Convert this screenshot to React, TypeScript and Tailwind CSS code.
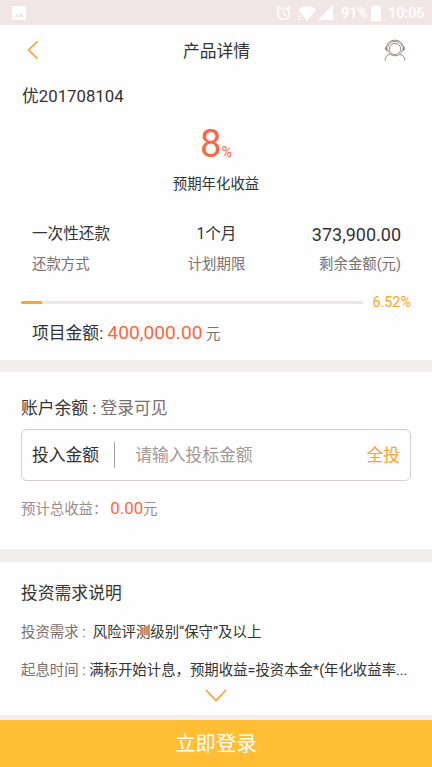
import type { ReactNode } from "react";

const product = {
  name: "优201708104",
  rate: "8",
  total: "400,000.00",
  progress: 6.52,
};

const stats = [
  { value: "一次性还款", label: "还款方式", align: "text-left", size: "text-[15.6px]" },
  { value: "1个月", label: "计划期限", align: "text-center", size: "text-[15.6px]" },
  { value: "373,900.00", label: "剩余金额(元)", align: "text-right", size: "text-[18px]" },
];

function StatusBar() {
  return (
    <div className="flex h-[25px] items-center bg-[#f0e6e6] pl-3 text-white">
      <svg width="14" height="14" viewBox="0 0 14 14">
        <rect width="14" height="14" rx="1.5" fill="currentColor" />
        <path d="M2 11l2.5-3.2 2 2L9 7l3 4z" fill="#f0e6e6" />
      </svg>
      <svg className="ml-[250px]" width="16" height="16" viewBox="0 0 16 16" fill="none" stroke="currentColor" strokeWidth="1.4">
        <circle cx="7.5" cy="8.7" r="5.8" />
        <path d="M7.500 5.300v3.700l2.600 1.600M.5 4l3-2.600M14.500 4l-3-2.600" />
      </svg>
      <svg className="ml-[5px]" width="20" height="16" viewBox="0 0 20 16" fill="currentColor">
        <path d="M1 4.500C6 0 14 0 19 4.500L10 15.500z" />
        <path d="M2.500 10L4.500 12H.5zM.5 13.500h4l-2 2z" />
      </svg>
      <svg className="ml-[1px]" width="15" height="15" viewBox="0 0 15 15" fill="currentColor">
        <path d="M15 0v15H0z" />
      </svg>
      <span className="ml-[8px] w-[30px] whitespace-nowrap pt-[2px] text-[14.400px] font-medium leading-6">91%</span>
      <svg width="10" height="16" viewBox="0 0 10 16" fill="currentColor">
        <path d="M3 0h4v1.500h3V16H0V1.500h3z" />
      </svg>
      <span className="ml-[7px] pt-[2px] text-[14.400px] font-medium leading-6">10:06</span>
    </div>
  );
}

function ServiceIcon() {
  return (
    <svg width="22" height="22" viewBox="0 0 22 22" fill="none" stroke="#8f8381" strokeWidth="0.9">
      <circle cx="11" cy="10" r="5.700" />
      <path d="M2.700 7.500a8.600 8.600 0 0 1 16.600 0" />
      <path d="M3.900 7.500a7.500 7.500 0 0 1 14.200 0" />
      <path d="M2.700 7.500c-1 .5-1.500 1.300-1.400 2.200.1.900.8 1.500 1.800 1.700zM19.300 7.500c1 .5 1.500 1.300 1.400 2.200-.1.900-.8 1.500-1.800 1.700z" fill="#8f8381" />
      <path d="M3.500 11c.5 1.700 1.400 3 2.600 3.900M18.500 11c-.5 1.700-1.400 3-2.600 3.900" />
      <path d="M1.200 21.500c0-3.700 1.600-5.700 4.900-6.100 3.100 1.900 6.700 1.900 9.800 0 3.300.4 4.900 2.400 4.900 6.100" />
    </svg>
  );
}

function NoteRow({ label, children }: { label: string; children: ReactNode }) {
  return (
    <p className="flex h-[38px] items-center whitespace-pre text-[14.400px]">
      <span className="text-[#7a706e]">{label}</span>
      {children}
    </p>
  );
}

export default function App() {
  return (
    <div className="flex h-[767px] w-[432px] flex-col overflow-hidden bg-[#f3eeee] font-[Roboto,'Noto_Sans_CJK_SC',sans-serif] text-[16.800px] leading-6 text-[#333]">
      <StatusBar />

      <section className="h-[335px] bg-[#fefefe]">
        <header className="flex h-[50px] items-center justify-between pl-[27px] pr-[26px]">
          <svg width="12" height="18" viewBox="0 0 12 18" fill="none" stroke="#fba033" strokeWidth="1.700">
            <path d="M10.500.5L1.500 9l9 8.500" />
          </svg>
          <h1 className="pl-[10px] pt-[2px]">产品详情</h1>
          <ServiceIcon />
        </header>

        <h2 className="mt-[9px] px-[22px]">{product.name}</h2>

        <div className="mt-[10px] text-center">
          <p className="h-[52px] text-[38.400px] leading-[52px] text-[#ff6543]">
            {product.rate}
            <span className="text-[14.400px]">%</span>
          </p>
          <p className="mt-[3px] text-[14.400px]">预期年化收益</p>
        </div>

        <dl className="mt-[25px] grid grid-cols-3 pl-8 pr-[31px]">
          {stats.map(({ value, label, align, size }) => (
            <div key={label} className={align}>
              <dd className={`h-[31px] whitespace-nowrap leading-[25px] ${size}`}>{value}</dd>
              <dt className="text-[14.400px] text-[#7a706e]">{label}</dt>
            </div>
          ))}
        </dl>

        <div className="mt-[12px] flex items-center pl-[21px] pr-[21px]">
          <div className="h-[3px] w-[342px] rounded-sm bg-[#ede6e5]">
            <div className="h-full rounded-l-sm bg-[#fba52f]" style={{ width: `${product.progress - 0.4}%` }} />
          </div>
          <span className="ml-auto pt-[2px] text-[14.400px] text-[#fba52f]">{product.progress}%</span>
        </div>

        <p className="mt-[6px] whitespace-pre px-8">
          项目金额: <span className="text-[19.200px] text-[#ff6543]">{product.total}</span>
          <span className="text-[14.400px] text-[#7a706e]"> 元</span>
        </p>
      </section>

      <section className="mt-3 h-[177px] bg-[#fefefe] px-[21px] pt-6">
        <p className="whitespace-pre">
          账户余额 : <span className="text-[#7a706e]">登录可见</span>
        </p>
        <div className="mt-[9px] flex h-[52px] items-center rounded-md border border-[#d8cdcd] px-[10px]">
          <span>投入金额</span>
          <span className="ml-[15px] h-[26px] w-px bg-[#aaa1a0]" />
          <span className="ml-5 flex-1 text-[#a39997]">请输入投标金额</span>
          <button className="text-[#fba033]">全投</button>
        </div>
        <p className="mt-[15px] text-[14.400px] text-[#978d8b]">
          预计总收益：<span className="ml-[3px] text-[16.800px] text-[#ff6543]">0.00</span>元
        </p>
      </section>

      <section className="mt-[13px] h-[153px] bg-[#fefefe] px-[21px] pt-[19px]">
        <h3>投资需求说明</h3>
        <div className="mt-[9px]">
          <NoteRow label="投资需求 :  ">风险评测级别“保守”及以上</NoteRow>
          <NoteRow label="起息时间 : ">满标开始计息，预期收益=投资本金*(年化收益率...</NoteRow>
        </div>
        <svg className="mx-auto -mt-px" width="22" height="13" viewBox="0 0 22 13" fill="none" stroke="#fba033" strokeWidth="1.700">
          <path d="M1 1l10 10.500L21 1" />
        </svg>
      </section>

      <button className="mt-auto h-[47px] bg-[#ffbe34] text-[20.400px] text-white">立即登录</button>
    </div>
  );
}
